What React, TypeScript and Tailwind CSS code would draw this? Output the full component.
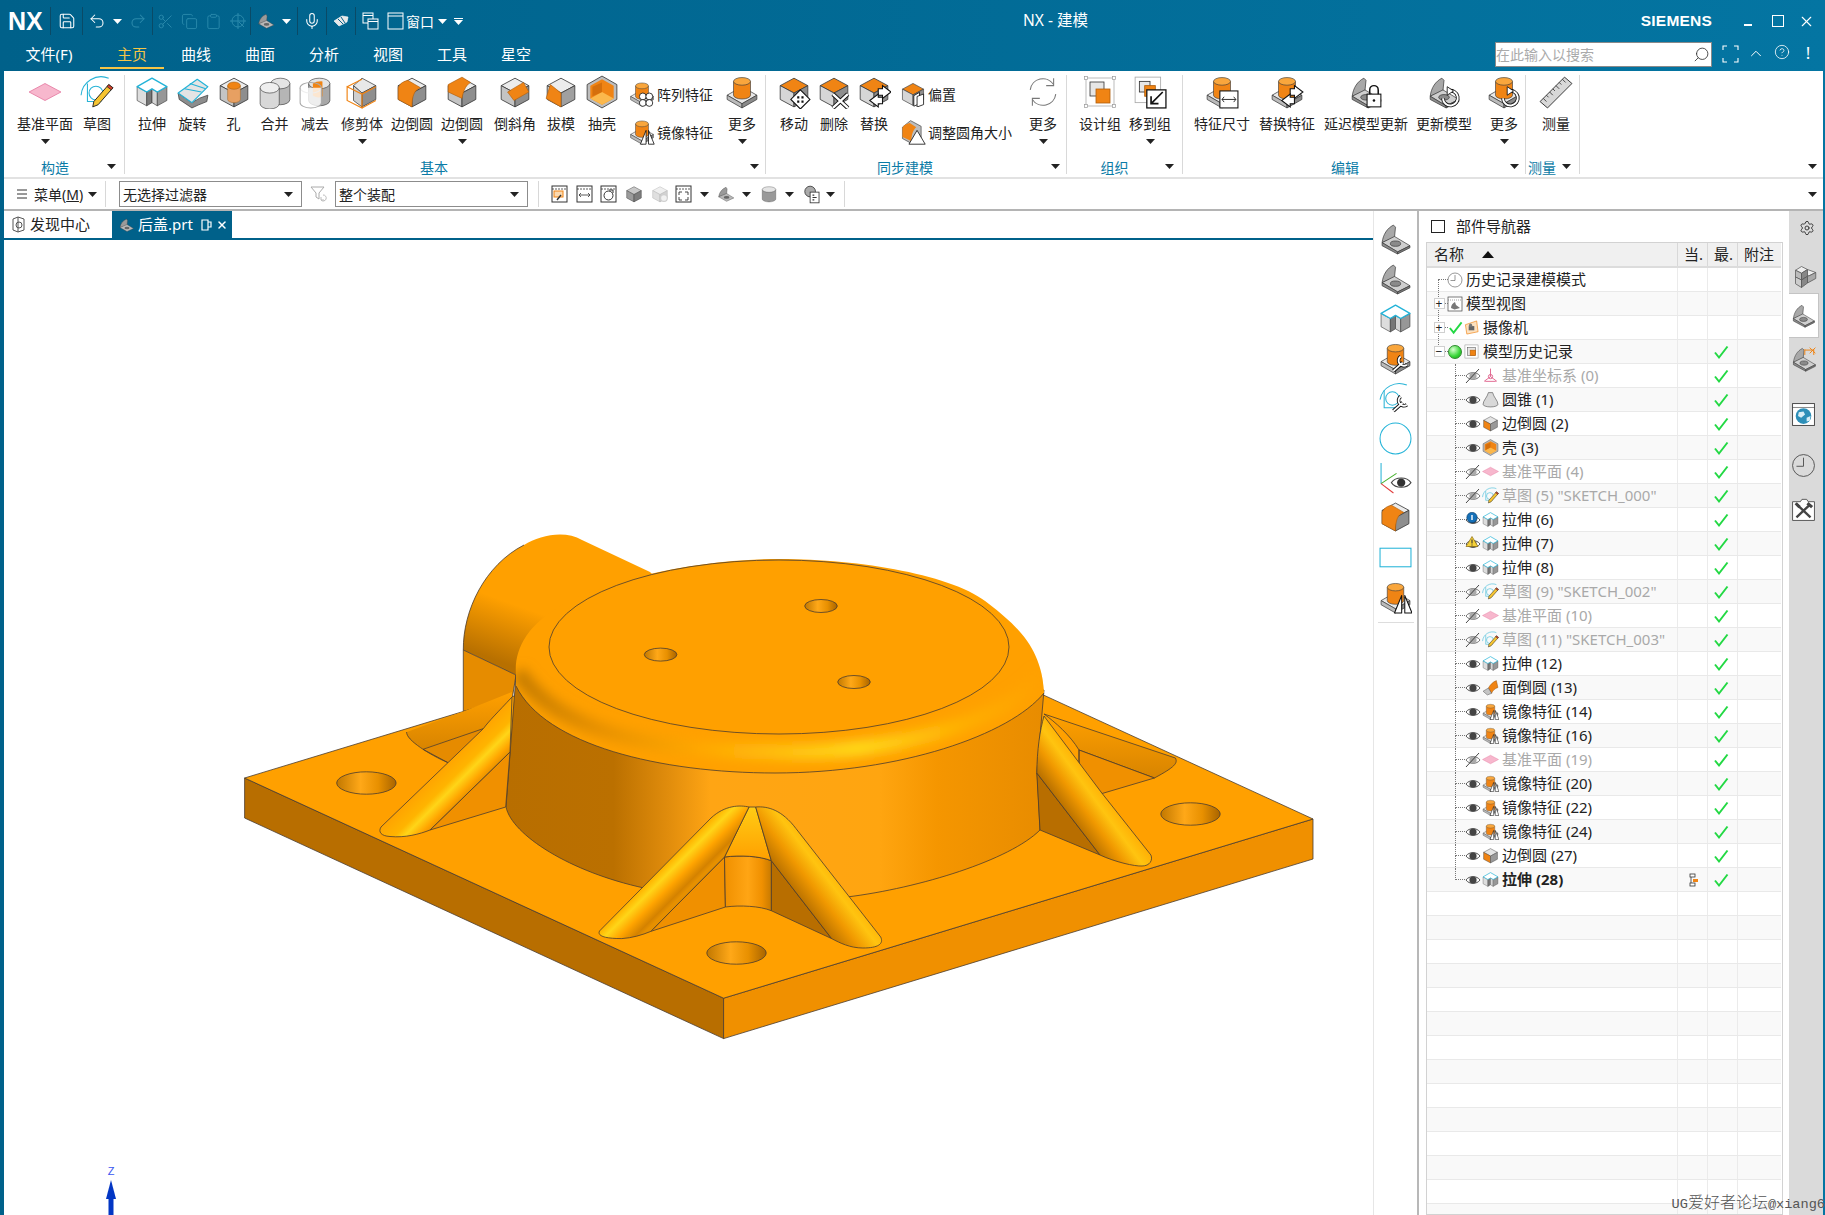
import type { ReactNode } from 'react'
import { Save, Undo2, Redo2, Scissors, Copy, Clipboard, Mic, X, Search, ChevronUp, CircleHelp, Settings } from 'lucide-react'

// shared little drawing parts, all on a 32 x 32 box
const Ico = ({ size = 32, children }: { size?: number; children: ReactNode }) => (
  <svg width={size} height={size} viewBox="0 0 32 32" className="shrink-0">
    {children}
  </svg>
)

const Caret = ({ color = '#222' }: { color?: string }) => (
  <svg width="9" height="5" viewBox="0 0 9 5" className="shrink-0">
    <polygon points="0,0 9,0 4.5,5" fill={color} />
  </svg>
)

const OR = '#f08414'
const ORL = '#f9a63c'
const LN = '#3c3c3c'

const Cube = ({ t = '#ececec', l = '#c4c4c4', r = '#8e8e8e' }: { t?: string; l?: string; r?: string }) => (
  <g stroke={LN} strokeWidth="0.8" strokeLinejoin="round">
    <polygon points="16,3 29,10 16,17 3,10" fill={t} />
    <polygon points="3,10 16,17 16,30 3,23" fill={l} />
    <polygon points="16,17 29,10 29,23 16,30" fill={r} />
  </g>
)

const Cyl = ({ cx, y, rx, ry, h, side = OR, top = ORL }: { cx: number; y: number; rx: number; ry: number; h: number; side?: string; top?: string }) => (
  <g stroke={LN} strokeWidth="0.6">
    <path d={`M${cx - rx} ${y} V${y + h} A${rx} ${ry} 0 0 0 ${cx + rx} ${y + h} V${y}`} fill={side} />
    <ellipse cx={cx} cy={y} rx={rx} ry={ry} fill={top} />
  </g>
)

const Block = () => (
  <g>
    <g stroke={LN} strokeWidth="0.7" strokeLinejoin="round">
      <polygon points="2,19 16,11 30,19 16,27" fill="#e8e8e8" />
      <polygon points="2,19 16,27 16,31 2,23" fill="#bbb" />
      <polygon points="16,27 30,19 30,23 16,31" fill="#8a8a8a" />
    </g>
    <Cyl cx={16} y={6} rx={8} ry={3.6} h={13} />
  </g>
)

const Bracket = () => (
  <g stroke={LN} strokeWidth="0.7" strokeLinejoin="round">
    <path d="M3 20 C4 12 8 6 14 3 L16 5 L15 15 Z" fill="#a8a8a8" />
    <polygon points="3,20 15,14 30,23 18,29" fill="#cfcfcf" />
    <polygon points="3,20 18,29 18,31 3,23" fill="#8d8d8d" />
    <polygon points="18,29 30,23 30,25 18,31" fill="#777" />
    <ellipse cx="16" cy="21" rx="5" ry="2.6" fill="#8a8a8a" />
  </g>
)

const OrangeTopCube = () => <Cube t={OR} l="#d6d6d6" r="#8e8e8e" />

const MirrorTri = ({ x = 0 }: { x?: number }) => (
  <g stroke="#111" strokeWidth="1" fill="#fff" strokeLinejoin="round" transform={`translate(${x} 0)`}>
    <polygon points="18,14 11,31 18,31" />
    <polygon points="21,14 21,31 28,31" />
  </g>
)

const Icons: Record<string, ReactNode> = {
  plane: <polygon points="16,8 31,16 16,24 1,16" fill="#f7b7cd" stroke="#e57ba2" strokeWidth="0.8" />,
  sketch: (
    <g fill="none">
      <path d="M1 19 A19 19 0 0 1 27 3" stroke="#27b3d6" strokeWidth="1" />
      <path d="M7 8 V25 H20" stroke="#27b3d6" strokeWidth="1" />
      <circle cx="15" cy="17" r="6.5" stroke="#27b3d6" strokeWidth="1" />
      <polygon points="27,9 31,12 17,28 12,30 13,25" fill="#f6c431" stroke="#222" strokeWidth="0.9" />
      <polygon points="27,9 31,12 29.5,14 25.5,11" fill="#d8402a" stroke="#222" strokeWidth="0.7" />
    </g>
  ),
  extrude: (
    <g strokeLinejoin="round">
      <polygon points="2,11 11,16 11,29 2,24" fill="#ddd" stroke={LN} strokeWidth="0.6" />
      <polygon points="11,16 16,13 16,26 11,29" fill="#777" stroke={LN} strokeWidth="0.6" />
      <polygon points="16,13 21,16 21,29 16,26" fill="#d5d5d5" stroke={LN} strokeWidth="0.6" />
      <polygon points="21,16 30,11 30,24 21,29" fill="#979797" stroke={LN} strokeWidth="0.6" />
      <polygon points="2,11 16,3 30,11 21,16 16,13 11,16" fill="#fff" stroke="#22b3d8" strokeWidth="1.3" />
    </g>
  ),
  revolve: (
    <g strokeLinejoin="round">
      <path d="M2 17 L15 26 Q22 21 30 19 L29 25 Q21 28 15 31 L3 23 Z" fill="#8d8d8d" stroke={LN} strokeWidth="0.7" />
      <polygon points="2,17 20,4 30,11 15,26" fill="#e4e4e4" stroke="#22b3d8" strokeWidth="1.1" />
      <path d="M8 13 L24 16 M13 8 L28 13" stroke="#22b3d8" strokeWidth="1" fill="none" />
    </g>
  ),
  hole: (
    <g>
      <Cube />
      <path d="M10 10 V23 A6 3 0 0 0 22 23 V10" fill="#e7a062" stroke="#a06a30" strokeWidth="0.5" />
      <ellipse cx="16" cy="10" rx="6" ry="3.4" fill={OR} stroke="#a05c10" strokeWidth="0.5" />
    </g>
  ),
  unite: (
    <g>
      <Cyl cx={21} y={8} rx={9} ry={5} h={15} side="#b5b5b5" top="#e4e4e4" />
      <Cyl cx={11} y={12} rx={9} ry={5} h={15} side="#d8d8d8" top="#efefef" />
    </g>
  ),
  subtract: (
    <g>
      <Cyl cx={20} y={8} rx={10} ry={5} h={16} side="#a8a8a8" top="#e4e4e4" />
      <path d="M14 8 A10 5 0 0 1 23 6 V20 C20 22 16 21 14 19 Z" fill={OR} />
      <g fill="none" stroke="#aaa" strokeWidth="1">
        <ellipse cx="12" cy="12" rx="10" ry="5" />
        <path d="M2 12 V26 A10 5 0 0 0 22 26 V12" fill="#fff" fillOpacity="0.8" />
      </g>
    </g>
  ),
  trim: (
    <g>
      <g stroke={LN} strokeWidth="0.7">
        <polygon points="16,3 29,10 16,17 8,10" fill="#e8e8e8" />
        <polygon points="16,17 29,10 29,23 16,30" fill="#8e8e8e" />
        <polygon points="8,10 16,17 16,30 8,24" fill="#cfcfcf" />
      </g>
      <path d="M2 11 L16 18 V31 L2 24 Z M2 11 L16 4 M16 18 L29 11 M16 31 L29 24" fill="none" stroke={OR} strokeWidth="1.1" />
    </g>
  ),
  blend: (
    <g>
      <Cube />
      <path d="M3 12 C5 7 9 6 12 5 L24 12 C18 14 16 20 16 30 L3 23 Z" fill={OR} stroke="#b05e0c" strokeWidth="0.6" />
    </g>
  ),
  blend2: (
    <g>
      <Cube />
      <path d="M3 9 L16 2 L24 7 C19 10 17 16 16 22 L3 16 Z" fill={OR} stroke="#b05e0c" strokeWidth="0.6" />
    </g>
  ),
  chamfer: (
    <g>
      <Cube />
      <polygon points="9,16 24,7 29,16 15,24" fill={OR} stroke="#b05e0c" strokeWidth="0.6" />
    </g>
  ),
  draft: (
    <g>
      <Cube r="#a0a0a0" />
      <polygon points="6,9 16,17 16,30 2,22" fill={OR} stroke="#b05e0c" strokeWidth="0.6" />
    </g>
  ),
  shell: (
    <g strokeLinejoin="round">
      <polygon points="16,1 30,9 30,23 16,31 2,23 2,9" fill="#bdbdbd" stroke={LN} strokeWidth="0.8" />
      <polygon points="16,4 27,10 27,22 16,28 5,22 5,10" fill={OR} />
      <polygon points="16,16 27,22 16,28 5,22" fill="#fbb84c" />
      <polygon points="16,16 16,7 7,11 7,20" fill="#d56f0c" />
    </g>
  ),
  pattern: (
    <g>
      <Block />
      <g fill="#fff" stroke="#111" strokeWidth="1">
        <circle cx="17" cy="19" r="4.2" />
        <circle cx="25" cy="19" r="4.2" />
        <circle cx="17" cy="27" r="4.2" />
        <circle cx="25" cy="27" r="4.2" />
      </g>
    </g>
  ),
  mirror: (
    <g>
      <Block />
      <MirrorTri x={3} />
    </g>
  ),
  more: <Block />,
  move: (
    <g>
      <OrangeTopCube />
      <polygon points="22,14 31,23 22,32 13,23" fill="#fff" stroke="#111" strokeWidth="1" />
      <path d="M19 20 h2 v2 h-2z M23 20 h2 v2 h-2z M19 24 h2 v2 h-2z M23 24 h2 v2 h-2z" fill="#111" />
    </g>
  ),
  del: (
    <g>
      <OrangeTopCube />
      <path d="M15 18 L29 31 M29 18 L15 31" stroke="#111" strokeWidth="4" />
      <path d="M15 18 L29 31 M29 18 L15 31" stroke="#fff" strokeWidth="2.2" />
    </g>
  ),
  swap: (
    <g>
      <OrangeTopCube />
      <polygon points="20,13 24,13 24,10 32,16 24,22 24,19 20,19" fill="#fff" stroke="#111" strokeWidth="1" />
      <polygon points="24,21 20,21 20,18 12,24 20,30 20,27 24,27" fill="#fff" stroke="#111" strokeWidth="1" />
    </g>
  ),
  offset: (
    <g>
      <OrangeTopCube />
      <path d="M17 18 L24 14 V28 L17 31 Z" fill="#fff" stroke="#111" strokeWidth="1" />
      <path d="M21 19 L29 16 V29 L21 32 Z" fill="#fff" stroke="#111" strokeWidth="1" />
    </g>
  ),
  resize: (
    <g>
      <path d="M3 10 L13 2 L26 9 V23 L14 30 L3 24 Z" fill="#bdbdbd" stroke={LN} strokeWidth="0.8" />
      <path d="M3 11 C5 7 9 6 12 5 L20 10 C16 13 14 20 14 27 L3 22 Z" fill={OR} />
      <polygon points="21,14 31,31 11,31" fill="#fff" stroke="#111" strokeWidth="1" />
    </g>
  ),
  sync: (
    <g fill="none" stroke="#777" strokeWidth="1">
      <path d="M4 14 A12 12 0 0 1 26 9" />
      <path d="M28 18 A12 12 0 0 1 6 23" />
      <path d="M26 3 V10 H19 M6 29 V22 H13" />
    </g>
  ),
  group: (
    <g>
      <rect x="2" y="2" width="28" height="28" fill="none" stroke="#aaa" strokeWidth="0.8" />
      <g fill="#fff" stroke="#999" strokeWidth="0.7">
        <rect x="0.5" y="0.5" width="3" height="3" />
        <rect x="28.5" y="0.5" width="3" height="3" />
        <rect x="0.5" y="28.5" width="3" height="3" />
        <rect x="28.5" y="28.5" width="3" height="3" />
      </g>
      <rect x="6" y="6" width="14" height="14" fill="#e6e6e6" stroke="#333" strokeWidth="0.8" />
      <rect x="12" y="13" width="14" height="14" fill={OR} stroke="#b05e0c" strokeWidth="0.8" />
    </g>
  ),
  toGroup: (
    <g>
      <rect x="2" y="2" width="24" height="24" fill="none" stroke="#aaa" strokeWidth="0.8" />
      <rect x="6" y="6" width="10" height="10" fill="#e6e6e6" stroke="#333" strokeWidth="0.8" />
      <rect x="11" y="10" width="10" height="10" fill={OR} stroke="#b05e0c" strokeWidth="0.8" />
      <rect x="13" y="14" width="18" height="17" fill="#fff" stroke="#111" strokeWidth="1.2" />
      <path d="M28 16 L18 26 M17 20 V27 H24" fill="none" stroke="#111" strokeWidth="1.6" />
    </g>
  ),
  dim: (
    <g>
      <Block />
      <rect x="14" y="15" width="17" height="16" fill="#fff" stroke="#111" strokeWidth="1" />
      <path d="M16 23 H29 M18 20.5 L16 23 L18 25.5 M27 20.5 L29 23 L27 25.5" fill="none" stroke="#111" strokeWidth="0.8" />
    </g>
  ),
  swapFeat: (
    <g>
      <Block />
      <polygon points="19,13 23,13 23,10 31,16 23,22 23,19 19,19" fill="#fff" stroke="#111" strokeWidth="1" />
      <polygon points="23,21 19,21 19,18 11,24 19,30 19,27 23,27" fill="#fff" stroke="#111" strokeWidth="1" />
    </g>
  ),
  delay: (
    <g>
      <Bracket />
      <rect x="17" y="18" width="13" height="12" fill="#fff" stroke="#111" strokeWidth="1" />
      <path d="M19.5 18 V14 A4 4 0 0 1 27.5 14 V18" fill="none" stroke="#111" strokeWidth="1.4" />
      <circle cx="23.5" cy="24" r="1.2" fill="#111" />
    </g>
  ),
  update: (
    <g>
      <Bracket />
      <path d="M15 22 A7 7 0 1 0 20 15" fill="none" stroke="#111" strokeWidth="3.4" />
      <path d="M15 22 A7 7 0 1 0 20 15" fill="none" stroke="#fff" strokeWidth="1.8" />
      <polygon points="19,11 25,15 19,19" fill="#fff" stroke="#111" strokeWidth="0.8" />
    </g>
  ),
  updateB: (
    <g>
      <Block />
      <path d="M15 22 A7 7 0 1 0 20 15" fill="none" stroke="#111" strokeWidth="3.4" />
      <path d="M15 22 A7 7 0 1 0 20 15" fill="none" stroke="#fff" strokeWidth="1.8" />
      <polygon points="19,11 25,15 19,19" fill="#fff" stroke="#111" strokeWidth="0.8" />
    </g>
  ),
  ruler: (
    <g>
      <polygon points="24,2 31,8 8,31 1,25" fill="#d8d8d8" stroke="#333" strokeWidth="0.9" />
      <path d="M22 4 L25 7 M19 7 L21 9 M16 10 L19 13 M13 13 L15 15 M10 16 L13 19 M7 19 L9 21 M4 22 L7 25" stroke="#333" strokeWidth="0.8" />
    </g>
  ),
  part: (
    <g>
      <path d="M3 21 C4 13 9 7 16 4 L18 7 L17 17 Z" fill="#9a9a9a" stroke="#444" strokeWidth="0.7" />
      <polygon points="3,21 17,15 30,23 17,29" fill="#b8b8b8" stroke="#444" strokeWidth="0.7" />
      <ellipse cx="17" cy="22" rx="5" ry="2.4" fill="#666" />
    </g>
  ),
  bracket: <Bracket />,
  blendSm: <Cube t="#e4e4e4" l={OR} r="#999" />,
  cone: <path d="M12 3 H20 C22 12 30 18 30 25 A14 5 0 0 1 2 25 C2 18 10 12 12 3 Z" fill="#d8d8d8" stroke={LN} strokeWidth="1" />,
  csys: (
    <g fill="none" stroke="#e0668f" strokeWidth="1.8">
      <path d="M16 3 V18 M16 18 L4 27 M16 18 L28 27 M6 27 H26" />
      <circle cx="16" cy="18" r="4" />
    </g>
  ),
  faceBlend: (
    <g strokeLinejoin="round">
      <path d="M12 17 C16 10 20 6 27 3 L30 16 C24 18 20 22 18 27 Z" fill={OR} stroke="#8a4a08" strokeWidth="0.8" />
      <polygon points="2,23 12,17 18,27 10,30" fill="#c4c4c4" stroke={LN} strokeWidth="0.8" />
    </g>
  ),
  mirrorSm: (
    <g>
      <Block />
      <MirrorTri x={4} />
    </g>
  ),
  wrench: (
    <g>
      <Block />
      <path d="M14 28 L23 20 M21 14 A5 5 0 0 0 27 22" stroke="#111" strokeWidth="3.6" fill="none" />
      <path d="M14 28 L23 20 M21 14 A5 5 0 0 0 27 22" stroke="#fff" strokeWidth="1.8" fill="none" />
    </g>
  ),
  sketchWrench: (
    <g fill="none">
      <path d="M1 17 A19 19 0 0 1 27 3" stroke="#27b3d6" strokeWidth="1" />
      <path d="M5 8 V25 H18" stroke="#27b3d6" strokeWidth="1" />
      <circle cx="13" cy="16" r="6.5" stroke="#27b3d6" strokeWidth="1" />
      <path d="M14 28 L23 20 M21 14 A5 5 0 0 0 27 22" stroke="#111" strokeWidth="3.6" />
      <path d="M14 28 L23 20 M21 14 A5 5 0 0 0 27 22" stroke="#fff" strokeWidth="1.8" />
    </g>
  ),
  circle: <circle cx="16" cy="16" r="15" fill="none" stroke="#22b3d8" strokeWidth="1" />,
  axisEye: (
    <g fill="none">
      <path d="M2 2 V22" stroke="#27b3d6" strokeWidth="1" />
      <path d="M2 22 L17 12" stroke="#43b02a" strokeWidth="1" />
      <path d="M2 22 L14 31" stroke="#e03a3a" strokeWidth="1" />
      <path d="M12 21 C16 15 27 15 31 21 C27 27 16 27 12 21 Z" stroke="#444" strokeWidth="1" />
      <circle cx="21.5" cy="21" r="4" fill="#333" />
    </g>
  ),
  rect: <rect x="1" y="7" width="30" height="18" fill="none" stroke="#22b3d8" strokeWidth="1" />,
  cam: (
    <g>
      <polygon points="3,10 27,2 30,25 6,30" fill="#fde2c0" stroke={OR} strokeWidth="1.4" />
      <rect x="10" y="13" width="12" height="9" fill="#666" />
      <circle cx="14" cy="11" r="3.4" fill="#777" />
    </g>
  ),
  hist: (
    <g>
      <rect x="2" y="2" width="28" height="28" fill="#fff" stroke="#888" strokeWidth="1" />
      <rect x="7" y="7" width="18" height="18" fill="#e6e6e6" stroke="#444" strokeWidth="1" />
      <rect x="13" y="13" width="12" height="12" fill={OR} stroke="#a85a0c" strokeWidth="1" />
    </g>
  ),
  view: (
    <g>
      <rect x="2" y="2" width="28" height="28" fill="#fff" stroke="#444" strokeWidth="1.4" />
      <path d="M2 8 H30" stroke="#444" strokeWidth="1" strokeDasharray="2 2" />
      <path d="M8 24 C8 18 12 14 16 12 L18 18 L26 24 L15 27 Z" fill="#777" />
    </g>
  ),
  sideBox: (
    <g stroke="#555" strokeWidth="1" strokeLinejoin="round">
      <polygon points="10,2 18,6 10,11 2,7" fill="#eee" />
      <polygon points="2,7 10,11 10,20 2,16" fill="#bbb" />
      <polygon points="10,11 18,6 18,15 10,20" fill="#888" />
      <polygon points="2,16 10,20 10,30 2,25" fill="#ccc" />
      <polygon points="10,20 18,15 18,24 10,30" fill="#888" />
      <polygon points="18,6 29,10 21,14 18,15" fill="#eee" />
      <polygon points="18,15 21,14 29,10 29,18 18,24" fill="#aaa" />
    </g>
  ),
  partSpec: (
    <g>
      <Bracket />
      <path d="M17 11 L17 4 M17 5 H28 M28 4 V11 M23 2 L30 9 M30 2 L23 9" stroke={OR} strokeWidth="1.2" fill="none" />
    </g>
  ),
  globe: (
    <g>
      <rect x="2" y="2" width="28" height="28" fill="#fff" stroke="#444" strokeWidth="1.2" />
      <path d="M2 7 H30" stroke="#444" strokeWidth="0.8" />
      <circle cx="16" cy="18" r="10" fill="#2d8fb8" />
      <path d="M10 13 L16 12 L18 16 L13 20 L9 18 Z M20 20 L25 18 L24 24 L20 25 Z" fill="#d8eef6" />
    </g>
  ),
  clock: (
    <g fill="none" stroke="#444" strokeWidth="1.1">
      <circle cx="16" cy="16" r="14" />
      <path d="M16 6 V17 H7" />
    </g>
  ),
  tools: (
    <g>
      <path d="M2 6 H12 L14 3 H20 L22 6 H30 V30 H2 Z" fill="#fff" stroke="#444" strokeWidth="1.1" />
      <path d="M7 26 L24 10 M8 10 L25 26" stroke="#444" strokeWidth="3" />
      <path d="M6 8 L11 13 M21 8 L27 13" stroke="#444" strokeWidth="4" />
    </g>
  ),
}

const I = ({ k, size = 32 }: { k: string; size?: number }) => <Ico size={size}>{Icons[k]}</Ico>

type Btn = { w: number; label: string; icon: string; arrow?: boolean; size?: number }
type Small = { label: string; icon: string }

const Big = ({ w, label, icon, arrow, size = 34 }: Btn) => (
  <div className="flex flex-col items-center shrink-0 text-[14px] leading-[18px] text-[#222]" style={{ width: w }}>
    <div className="h-[34px] flex items-center justify-center">
      <I k={icon} size={size} />
    </div>
    <div className="mt-[6px] whitespace-nowrap">{label}</div>
    {arrow && (
      <div className="mt-[6px]">
        <Caret />
      </div>
    )}
  </div>
)

const SmallCol = ({ w, items, pad }: { w: number; items: Small[]; pad: number }) => (
  <div className="flex flex-col shrink-0 gap-[8px] pt-[4px] text-[14px] text-[#222]" style={{ width: w, paddingLeft: pad }}>
    {items.map((it) => (
      <div key={it.label} className="flex items-center gap-[2px] h-[30px] whitespace-nowrap">
        <I k={it.icon} size={26} />
        {it.label}
      </div>
    ))}
  </div>
)

const Group = ({ w, pl, title, titleClass, arrowClass, children }: { w: number; pl: number; title: string; titleClass?: string; arrowClass?: string; children: ReactNode }) => (
  <div className="h-full flex flex-col shrink-0 border-r border-[#d9d9d9] relative" style={{ width: w }}>
    <div className="flex h-[85px]" style={{ paddingLeft: pl }}>
      {children}
    </div>
    <div className={`h-[14px] text-[14px] leading-[16px] text-[#0b7ba6] ${titleClass ?? 'text-center'}`}>{title}</div>
    <div className={`absolute top-[89px] ${arrowClass ?? 'right-[6px]'}`}>
      <Caret />
    </div>
  </div>
)

const Ribbon = () => (
  <div className="h-[108px] bg-white border-b-2 border-[#e2e2e2] pt-[4px] pb-[3px] flex relative">
    <Group w={121} pl={0} title="构造" titleClass="pr-[18px] text-center" arrowClass="right-[8px]">
      <Big w={82} label="基准平面" icon="plane" arrow />
      <Big w={22} label="草图" icon="sketch" />
    </Group>
    <Group w={641} pl={7} title="基本" titleClass="pr-[22px] text-center">
      <Big w={40} label="拉伸" icon="extrude" />
      <Big w={41} label="旋转" icon="revolve" />
      <Big w={41} label="孔" icon="hole" />
      <Big w={41} label="合并" icon="unite" />
      <Big w={40} label="减去" icon="subtract" />
      <Big w={54} label="修剪体" icon="trim" arrow />
      <Big w={46} label="边倒圆" icon="blend" />
      <Big w={54} label="边倒圆" icon="blend2" arrow />
      <Big w={52} label="倒斜角" icon="chamfer" />
      <Big w={40} label="拔模" icon="draft" />
      <Big w={42} label="抽壳" icon="shell" />
      <SmallCol w={99} pad={6} items={[{ label: '阵列特征', icon: 'pattern' }, { label: '镜像特征', icon: 'mirror' }]} />
      <Big w={40} label="更多" icon="more" arrow />
    </Group>
    <Group w={301} pl={8} title="同步建模" titleClass="pr-[22px] text-center">
      <Big w={40} label="移动" icon="move" />
      <Big w={40} label="删除" icon="del" />
      <Big w={40} label="替换" icon="swap" />
      <SmallCol w={129} pad={6} items={[{ label: '偏置', icon: 'offset' }, { label: '调整圆角大小', icon: 'resize' }]} />
      <Big w={40} label="更多" icon="sync" arrow />
    </Group>
    <Group w={116} pl={8} title="组织" titleClass="pr-[20px] text-center" arrowClass="right-[8px]">
      <Big w={50} label="设计组" icon="group" size={32} />
      <Big w={50} label="移到组" icon="toGroup" arrow />
    </Group>
    <Group w={343} pl={7} title="编辑" titleClass="pr-[18px] text-center">
      <Big w={64} label="特征尺寸" icon="dim" />
      <Big w={66} label="替换特征" icon="swapFeat" />
      <Big w={92} label="延迟模型更新" icon="delay" />
      <Big w={64} label="更新模型" icon="update" />
      <Big w={56} label="更多" icon="updateB" arrow />
    </Group>
    <Group w={54} pl={3} title="测量" titleClass="pl-[2px]" arrowClass="right-[8px]">
      <Big w={54} label="测量" icon="ruler" />
    </Group>
    <div className="absolute right-[6px] top-[93px]">
      <Caret />
    </div>
  </div>
)

const Combo = ({ w, text }: { w: number; text: string }) => (
  <div className="h-[26px] border border-[#8c8c8c] flex items-center justify-between pl-[3px] pr-[8px] text-[14px] text-[#222] shrink-0" style={{ width: w }}>
    {text}
    <Caret />
  </div>
)

const WinIco = ({ children }: { children?: ReactNode }) => (
  <svg width="18" height="18" viewBox="0 0 18 18" className="shrink-0">
    <rect x="1" y="1" width="15" height="16" fill="#fff" stroke="#333" strokeWidth="1" />
    <path d="M1 4 H16" stroke="#333" strokeWidth="0.8" strokeDasharray="2 1" />
    {children}
  </svg>
)

const Toolbar = () => (
  <div className="h-[32px] bg-white border-b-2 border-[#b4b4b4] flex items-center relative text-[14px] text-[#222]">
    <svg width="10" height="10" viewBox="0 0 10 10" className="ml-[13px] shrink-0">
      <path d="M0 1 H10 M0 5 H10 M0 9 H10" stroke="#333" strokeWidth="1" />
    </svg>
    <span className="ml-[7px] whitespace-nowrap">
      菜单(<span className="underline">M</span>)
    </span>
    <span className="ml-[5px]">
      <Caret />
    </span>
    <div className="w-px h-[26px] bg-[#d8d8d8] ml-[8px] mr-[13px]" />
    <Combo w={183} text="无选择过滤器" />
    <svg width="20" height="20" viewBox="0 0 20 20" className="ml-[7px] mr-[6px] shrink-0">
      <path d="M2 3 H15 L10 9 V15 L7 13 V9 Z" fill="#fff" stroke="#aaa" strokeWidth="1" />
      <path d="M12 16 A3 3 0 1 0 14 11 M12 13 V16 H15" fill="none" stroke="#bbb" strokeWidth="1" />
    </svg>
    <Combo w={193} text="整个装配" />
    <div className="w-px h-[26px] bg-[#d8d8d8] ml-[10px] mr-[12px]" />
    <div className="flex items-center">
      <div className="w-[25px]">
        <WinIco>
          <rect x="3" y="6" width="9" height="6" fill="#fbd9b0" stroke={OR} strokeWidth="1" />
          <path d="M6 15 L10 10" stroke="#333" strokeWidth="1.4" />
        </WinIco>
      </div>
      <div className="w-[24px]">
        <WinIco>
          <path d="M3 10 H14 M5 8 L3 10 L5 12 M12 8 L14 10 L12 12" fill="none" stroke="#333" strokeWidth="0.8" />
        </WinIco>
      </div>
      <div className="w-[25px]">
        <WinIco>
          <circle cx="8.5" cy="10.5" r="4.5" fill="none" stroke="#333" strokeWidth="1" />
          <path d="M9 5 H13 V8" fill="none" stroke="#333" strokeWidth="1" />
        </WinIco>
      </div>
      <div className="w-[25px] flex">
        <svg width="18" height="18" viewBox="0 0 32 32">
          <Cube t="#c8c8c8" l="#9b9b9b" r="#7d7d7d" />
        </svg>
      </div>
      <div className="w-[25px] flex opacity-40">
        <svg width="20" height="18" viewBox="0 0 32 32">
          <Cube t="#d8d8d8" l="#b0b0b0" r="#909090" />
          <circle cx="23" cy="23" r="6" fill="#ddd" stroke="#888" strokeWidth="2" />
        </svg>
      </div>
      <div className="w-[20px]">
        <WinIco>
          <path d="M4 7 L7 7 M4 7 V10 M13 7 L10 7 M13 7 V10 M4 15 H7 M4 15 V12 M13 15 H10 M13 15 V12" stroke="#333" strokeWidth="0.9" fill="none" />
        </WinIco>
      </div>
      <div className="w-[22px] pl-[5px]">
        <Caret />
      </div>
      <div className="w-[21px]">
        <svg width="18" height="18" viewBox="0 0 32 32">
          {Icons.part}
        </svg>
      </div>
      <div className="w-[22px] pl-[4px]">
        <Caret />
      </div>
      <div className="w-[22px]">
        <svg width="18" height="18" viewBox="0 0 32 32">
          <Cyl cx={16} y={8} rx={12} ry={5} h={17} side="#999" top="#e4e4e4" />
        </svg>
      </div>
      <div className="w-[21px] pl-[3px]">
        <Caret />
      </div>
      <div className="w-[21px]">
        <svg width="19" height="19" viewBox="0 0 32 32">
          <circle cx="12" cy="11" r="9" fill="#aaa" stroke="#333" strokeWidth="1.4" />
          <rect x="12" y="12" width="15" height="18" fill="#fff" stroke="#333" strokeWidth="1.4" />
          <path d="M16 17 h3 M16 21 h7 M16 25 h3" stroke="#333" strokeWidth="2" />
        </svg>
      </div>
      <div className="w-[20px] pl-[2px]">
        <Caret />
      </div>
    </div>
    <div className="w-px h-[26px] bg-[#d8d8d8]" />
    <div className="ml-auto mr-[6px]">
      <Caret />
    </div>
  </div>
)

const Sep = () => <div className="w-px h-[28px] bg-[#0a4a66] shrink-0" />

const TitleBar = () => (
  <div className="h-[36px] pt-[6px] flex items-center text-white">
    <div className="w-[50px] pl-[8px] text-[25px] leading-none font-bold font-['Liberation_Sans',sans-serif] shrink-0">NX</div>
    <Sep />
    <div className="w-[31px] flex justify-center"><Save size={18} strokeWidth={1.4} /></div>
    <Sep />
    <div className="w-[28px] flex justify-center"><Undo2 size={18} strokeWidth={1.4} /></div>
    <div className="w-[12px] flex justify-center"><Caret color="#fff" /></div>
    <div className="w-[29px] flex justify-center text-[#2b8aac]"><Redo2 size={18} strokeWidth={1.4} /></div>
    <Sep />
    <div className="w-[24px] flex justify-center text-[#2b8aac]"><Scissors size={17} strokeWidth={1.3} /></div>
    <div className="w-[24px] flex justify-center text-[#2b8aac]"><Copy size={17} strokeWidth={1.3} /></div>
    <div className="w-[24px] flex justify-center text-[#2b8aac]"><Clipboard size={17} strokeWidth={1.3} /></div>
    <div className="w-[25px] flex justify-center text-[#2b8aac]">
      <svg width="18" height="18" viewBox="0 0 18 18" fill="none" stroke="currentColor" strokeWidth="1">
        <circle cx="9" cy="9" r="6" />
        <path d="M9 1 V17 M1 9 H17 M10 10 L15 15" />
      </svg>
    </div>
    <Sep />
    <div className="w-[30px] flex justify-center">
      <svg width="20" height="18" viewBox="0 0 32 32">{Icons.part}</svg>
    </div>
    <div className="w-[16px] pl-[1px]"><Caret color="#fff" /></div>
    <Sep />
    <div className="w-[28px] flex justify-center"><Mic size={18} strokeWidth={1.4} /></div>
    <Sep />
    <div className="w-[28px] flex justify-center">
      <svg width="18" height="14" viewBox="0 0 18 14">
        <path d="M2 7 L10 2 L16 3 L15 8 L7 12 Z" fill="#e8e8e8" stroke="#fff" strokeWidth="0.6" />
        <path d="M6 5 L11 10 M9 3 L13 9" stroke="#05608a" strokeWidth="1" />
      </svg>
    </div>
    <Sep />
    <div className="w-[29px] flex justify-center">
      <svg width="17" height="18" viewBox="0 0 17 18" fill="none" stroke="#fff" strokeWidth="1">
        <rect x="1" y="1" width="10" height="10" />
        <path d="M1 3.5 H11" />
        <rect x="6" y="7" width="10" height="10" fill="#05618a" />
        <path d="M6 9.5 H16" />
      </svg>
    </div>
    <div className="w-[20px] flex justify-center">
      <svg width="17" height="18" viewBox="0 0 17 18" fill="none" stroke="#fff" strokeWidth="1">
        <rect x="1" y="1" width="15" height="16" />
        <path d="M1 4 H16" />
      </svg>
    </div>
    <span className="ml-[1px] text-[14px] whitespace-nowrap w-[32px]">窗口</span>
    <div className="w-[16px]"><Caret color="#fff" /></div>
    <svg width="9" height="7" viewBox="0 0 9 7" className="shrink-0">
      <path d="M0 0.5 H9" stroke="#fff" />
      <polygon points="0,2 9,2 4.5,7" fill="#fff" />
    </svg>
    <div className="ml-[560px] text-[15.5px] whitespace-nowrap">NX - 建模</div>
    <div className="ml-auto text-[15.5px] tracking-[0.2px] font-bold font-['Liberation_Sans',sans-serif] mr-[21px]">SIEMENS</div>
    <div className="w-[30px] flex justify-center pt-[8px]"><div className="w-[8px] h-[2px] bg-white" /></div>
    <div className="w-[30px] flex justify-center"><div className="w-[12px] h-[12px] border border-white" /></div>
    <div className="w-[26px] flex justify-center"><X size={17} strokeWidth={1.6} /></div>
    <div className="w-[6px]" />
  </div>
)

const tabs = ['曲线', '曲面', '分析', '视图', '工具', '星空']

const MenuBar = () => (
  <div className="h-[35px] flex items-stretch text-white text-[15px] pl-[17px]">
    <div className="w-[64px] text-center leading-[37px]">文件(F)</div>
    <div className="w-[64px] ml-[19px] text-center leading-[37px] text-[#f6c546] h-[33px] border-b-2 border-[#f6c546]">主页</div>
    {tabs.map((t) => (
      <div key={t} className="w-[64px] text-center leading-[37px]">
        {t}
      </div>
    ))}
    <div className="ml-auto flex items-start text-[#fff]">
      <div className="w-[217px] h-[25px] mt-[6px] bg-white border border-[#8a8a8a] flex items-center justify-between text-[14px] text-[#aaa] pr-[1px]">
        在此输入以搜索
        <Search size={17} strokeWidth={1.2} className="text-[#333] -scale-x-100" />
      </div>
      <div className="w-[35px] h-[35px] flex items-start justify-center pt-[9px] pl-[2px]">
        <svg width="17" height="18" viewBox="0 0 17 18" fill="none" stroke="#fff" strokeWidth="1.1">
          <path d="M1 5 V1 H5 M12 1 H16 V5 M16 13 V17 H12 M5 17 H1 V13" />
        </svg>
      </div>
      <div className="w-[18px] flex justify-center pt-[8px]"><ChevronUp size={19} strokeWidth={1.3} /></div>
      <div className="w-[34px] flex justify-center pt-[8px]"><CircleHelp size={16} strokeWidth={1.2} /></div>
      <div className="w-[18px] pt-[7px] text-center text-[17px] leading-[20px]">!</div>
      <div className="w-[8px]" />
    </div>
  </div>
)

const Model = () => (
  <svg width="1369" height="975" viewBox="4 240 1369 975" className="block">
    <defs>
      <linearGradient id="boss" gradientUnits="userSpaceOnUse" x1="502" y1="600" x2="482" y2="655">
        <stop offset="0" stopColor="#ffa000" />
        <stop offset="1" stopColor="#b87000" />
      </linearGradient>
      <linearGradient id="side" gradientUnits="userSpaceOnUse" x1="506" y1="0" x2="1044" y2="0">
        <stop offset="0" stopColor="#b86e00" />
        <stop offset="0.2" stopColor="#bb7000" />
        <stop offset="0.3" stopColor="#e08c0c" />
        <stop offset="0.38" stopColor="#ffa514" />
        <stop offset="0.695" stopColor="#ffa510" />
        <stop offset="0.8" stopColor="#f59600" />
        <stop offset="1" stopColor="#e88c00" />
      </linearGradient>
      <linearGradient id="fil" gradientUnits="userSpaceOnUse" x1="516" y1="0" x2="1042" y2="0">
        <stop offset="0" stopColor="#c27a00" />
        <stop offset="0.16" stopColor="#e69000" />
        <stop offset="0.35" stopColor="#ffa800" />
        <stop offset="0.65" stopColor="#ffdd1e" />
        <stop offset="0.85" stopColor="#ffb000" />
        <stop offset="1" stopColor="#ffa000" />
      </linearGradient>
      <linearGradient id="ribL" gradientUnits="userSpaceOnUse" x1="437" y1="767" x2="472" y2="802">
        <stop offset="0" stopColor="#ffa000" />
        <stop offset="0.38" stopColor="#ffb400" />
        <stop offset="0.52" stopColor="#ffd518" />
        <stop offset="0.72" stopColor="#ffa400" />
        <stop offset="0.92" stopColor="#d48200" />
        <stop offset="1" stopColor="#e69000" />
      </linearGradient>
      <linearGradient id="ribF" gradientUnits="userSpaceOnUse" x1="648" y1="855" x2="685" y2="892">
        <stop offset="0" stopColor="#ffa000" />
        <stop offset="0.38" stopColor="#ffb400" />
        <stop offset="0.52" stopColor="#ffd518" />
        <stop offset="0.72" stopColor="#ffa400" />
        <stop offset="0.92" stopColor="#d48200" />
        <stop offset="1" stopColor="#e69000" />
      </linearGradient>
      <linearGradient id="ribG" gradientUnits="userSpaceOnUse" x1="800" y1="900" x2="842" y2="868">
        <stop offset="0" stopColor="#b87000" />
        <stop offset="0.35" stopColor="#f09800" />
        <stop offset="0.65" stopColor="#ffc410" />
        <stop offset="1" stopColor="#ffa800" />
      </linearGradient>
      <linearGradient id="ribR" gradientUnits="userSpaceOnUse" x1="1068" y1="815" x2="1106" y2="787">
        <stop offset="0" stopColor="#b87000" />
        <stop offset="0.35" stopColor="#f09800" />
        <stop offset="0.65" stopColor="#ffc410" />
        <stop offset="1" stopColor="#ffa800" />
      </linearGradient>
      <linearGradient id="wedge" x1="0" y1="0" x2="0" y2="1">
        <stop offset="0" stopColor="#ffcc14" />
        <stop offset="1" stopColor="#ff9f00" />
      </linearGradient>
      <linearGradient id="col" x1="0" y1="0" x2="1" y2="0">
        <stop offset="0" stopColor="#f09000" />
        <stop offset="0.5" stopColor="#ffa514" />
        <stop offset="0.8" stopColor="#f09000" />
        <stop offset="1" stopColor="#c87a00" />
      </linearGradient>
      <linearGradient id="hole" x1="0" y1="0" x2="1" y2="0">
        <stop offset="0" stopColor="#c27800" />
        <stop offset="0.4" stopColor="#ffa818" />
        <stop offset="0.7" stopColor="#e89000" />
        <stop offset="1" stopColor="#a86400" />
      </linearGradient>
      <linearGradient id="pocket" x1="0" y1="0" x2="0" y2="1">
        <stop offset="0" stopColor="#ffa000" />
        <stop offset="1" stopColor="#d88400" />
      </linearGradient>
      <filter id="soft" x="-10%" y="-50%" width="120%" height="200%">
        <feGaussianBlur stdDeviation="6" />
      </filter>
      <clipPath id="filClip">
        <path d="M516 675 C514 650 526 625 564 604 C605 582 690 559 780 559 C860 559 955 575 989 604 C1020 628 1042 650 1044 693 C1010 735 900 773 775 773 C660 773 545 745 516 686 Z" />
      </clipPath>
    </defs>
    <g stroke="#4a3c30" strokeWidth="0.8" strokeLinejoin="round">
      {/* rear boss */}
      <path d="M463.3 650 C463 610 485 565 524 545 C540 535 565 530 582 540 L650 572 L720 640 L516 675 Z" fill="url(#boss)" stroke="none" />
      <path d="M463.3 650 C463 610 485 565 524 545" fill="none" />
      <path d="M463.3 650 L516 675 L512 700 L463.3 711.4 Z" fill="#e68c00" />
      {/* plate */}
      <polygon points="244.6,778 723.6,998.2 723.6,1038.6 244.6,818" fill="#b86e00" />
      <polygon points="723.6,998.2 1313,819 1313,859 723.6,1038.6" fill="#f09000" />
      <polygon points="244.6,778 834,598.7 1313,819 723.6,998.2" fill="#ffa000" />
      {/* rear pockets */}
      <path d="M406.6 732 L463.3 711.4 L512 692 L512 700 L483.4 728.6 L423 749 C414 743 406 738 406.6 732 Z" fill="url(#pocket)" stroke="none" />
      <path d="M423 749.3 L483.4 728.6 L460 775 L447.7 762.5 Z" fill="#e68b00" />
      <path d="M406.6 732 C406 740 430 755 447.7 762.5" fill="none" />
      <path d="M1044 714 L1175.4 758 C1178 763 1175 767 1154.4 778 L1079 750 C1070 735 1055 722 1044 714 Z" fill="url(#pocket)" />
      <path d="M1079 750 L1154.4 778 L1101.8 793.6 L1079 766 Z" fill="#f09000" />
      <path d="M1079 750 V766" fill="none" />
      {/* plate holes */}
      <ellipse cx="366.4" cy="783" rx="29.7" ry="11.2" fill="url(#hole)" />
      <ellipse cx="736.5" cy="953" rx="29.7" ry="11.2" fill="url(#hole)" />
      <ellipse cx="1190.5" cy="814" rx="29.7" ry="11.2" fill="url(#hole)" />
      {/* main body */}
      <path d="M516 675 L506 807 C512 835 570 872 644 888 C700 900 790 905 847 897 C920 888 1010 860 1040 830 L1037 771 L1044 690 Z" fill="url(#side)" />
      <path d="M516 675 C514 650 526 625 564 604 C605 582 690 559 780 559 C860 559 955 575 989 604 C1020 628 1042 650 1044 693 C1010 735 900 773 775 773 C660 773 545 745 516 686 Z" fill="#ffa000" stroke="none" />
      <g clipPath="url(#filClip)" stroke="none">
        <path d="M518 672 C560 735 660 752 775 752 C885 755 1000 725 1042 676" fill="none" stroke="url(#fil)" strokeWidth="15" filter="url(#soft)" />
      </g>
      <path d="M1044 693 C1010 735 900 773 775 773 C660 773 545 745 516 686" fill="none" />
      <ellipse cx="779" cy="647" rx="230" ry="87" fill="#ffa000" />
      <ellipse cx="821" cy="606" rx="16.3" ry="6.5" fill="url(#hole)" />
      <ellipse cx="660.6" cy="654.6" rx="16.3" ry="6.5" fill="url(#hole)" />
      <ellipse cx="854" cy="682" rx="16.3" ry="6.5" fill="url(#hole)" />
      {/* left rib */}
      <path d="M510 752 L430 830 L505.7 807 Z" fill="#f09000" />
      <path d="M512 697 C498 712 488 722 483.4 728.6 L381 827 C378 832 381 836 390 836.5 C405 838 420 834 430 830 L510 752 Z" fill="url(#ribL)" />
      {/* front ribs */}
      <path d="M724.5 857 L650.8 931.4 L725.4 907 Z" fill="#f09000" />
      <path d="M771.3 860.7 L831.6 938.6 L771.3 910.7 Z" fill="#b86e00" />
      <path d="M724.5 857 C740 855 760 856 771.3 860.7 L771.3 910.7 C760 906 740 905 725.4 907 Z" fill="url(#col)" />
      <path d="M749 807 L755.7 807 L771.3 860.7 C760 856 740 855 724.5 857 Z" fill="url(#wedge)" />
      <path d="M749 807 C740 805 725 805 711 818 L599.5 931 C597 936 605 938.6 621.8 938.6 C632 938 642 935 650.8 931.4 L724.5 857 Z" fill="url(#ribF)" />
      <path d="M755.7 807 C768 806 782 810 796 828.6 L880.7 937 C884 944 878 948 862.9 948 C850 948 840 943 831.6 938.6 L771.3 860.7 Z" fill="url(#ribG)" />
      {/* right rib */}
      <path d="M1036.8 773 L1100 855 L1040 830 Z" fill="#b86e00" />
      <path d="M1044 716 L1101.8 793 L1150.9 855 C1153 860 1150 866 1142 866 C1135 866.5 1115 862 1100 855 L1036.8 773 C1037 750 1040 730 1044 716 Z" fill="url(#ribR)" />
    </g>
    {/* WCS axis stub */}
    <text x="111" y="1175" textAnchor="middle" fontSize="11" fill="#3a55f0" fontFamily="Liberation Sans, sans-serif">Z</text>
    <polygon points="111,1180 116,1199 106,1199" fill="#0336c4" />
    <rect x="108.5" y="1197" width="5" height="18" fill="#0336c4" />
  </svg>
)

const sideIcons = ['bracket', 'bracket', 'extrude', 'wrench', 'sketchWrench', 'circle', 'axisEye', 'blend', 'rect', 'mirrorSm']
const sideGaps = [0, 7, 7, 7, 7, 7, 6, 6, 8, 7]

const SideBar = () => (
  <div className="w-[44px] shrink-0 border-l border-[#e6e6e6] pt-[11px] flex flex-col items-center">
    {sideIcons.map((k, i) => (
      <div key={i} style={{ marginTop: sideGaps[i] }}>
        <I k={k} size={33} />
      </div>
    ))}
    <div className="w-[36px] h-px bg-[#ddd] mt-[8px]" />
  </div>
)

type Row = { t: string; icon: string; off?: boolean; badge?: 'info' | 'warn'; bold?: boolean }

const rows: Row[] = [
  { t: '基准坐标系 (0)', icon: 'csys', off: true },
  { t: '圆锥 (1)', icon: 'cone' },
  { t: '边倒圆 (2)', icon: 'blendSm' },
  { t: '壳 (3)', icon: 'shell' },
  { t: '基准平面 (4)', icon: 'plane', off: true },
  { t: '草图 (5) "SKETCH_000"', icon: 'sketch', off: true },
  { t: '拉伸 (6)', icon: 'extrude', badge: 'info' },
  { t: '拉伸 (7)', icon: 'extrude', badge: 'warn' },
  { t: '拉伸 (8)', icon: 'extrude' },
  { t: '草图 (9) "SKETCH_002"', icon: 'sketch', off: true },
  { t: '基准平面 (10)', icon: 'plane', off: true },
  { t: '草图 (11) "SKETCH_003"', icon: 'sketch', off: true },
  { t: '拉伸 (12)', icon: 'extrude' },
  { t: '面倒圆 (13)', icon: 'faceBlend' },
  { t: '镜像特征 (14)', icon: 'mirrorSm' },
  { t: '镜像特征 (16)', icon: 'mirrorSm' },
  { t: '基准平面 (19)', icon: 'plane', off: true },
  { t: '镜像特征 (20)', icon: 'mirrorSm' },
  { t: '镜像特征 (22)', icon: 'mirrorSm' },
  { t: '镜像特征 (24)', icon: 'mirrorSm' },
  { t: '边倒圆 (27)', icon: 'blendSm' },
  { t: '拉伸 (28)', icon: 'extrude', bold: true },
]

const Check = ({ size = 16 }: { size?: number }) => (
  <svg width={size} height={size} viewBox="0 0 16 16" className="shrink-0">
    <path d="M2 8.5 L6 13.5 L14.5 2.5" fill="none" stroke="#23d944" strokeWidth="2" />
  </svg>
)

const Eye = ({ off, badge }: { off?: boolean; badge?: 'info' | 'warn' }) => (
  <svg width="16" height="16" viewBox="0 0 16 16" className="shrink-0">
    <path d="M1 8 C4 3.5 12 3.5 15 8 C12 12.5 4 12.5 1 8 Z" fill="#fff" stroke={off ? '#666' : '#444'} strokeWidth="0.9" />
    <circle cx="8" cy="8" r="3.6" fill={off ? '#aaa' : '#444'} />
    {off && <path d="M1 15 L14 1" stroke="#333" strokeWidth="0.9" />}
    {badge === 'info' && (
      <g>
        <circle cx="7" cy="5.5" r="5.2" fill="#1570b8" stroke="#0b3c66" strokeWidth="0.6" />
        <path d="M7 3 V8" stroke="#fff" strokeWidth="1.4" />
      </g>
    )}
    {badge === 'warn' && (
      <g>
        <polygon points="7,0.5 13,10.5 1,10.5" fill="#f6d23a" stroke="#8a6a10" strokeWidth="0.7" />
        <path d="M7 3.5 V7.5 M7 8.5 V9.6" stroke="#333" strokeWidth="1.1" />
      </g>
    )}
  </svg>
)

const Cells = ({ children, cur, best }: { children: ReactNode; cur?: ReactNode; best?: boolean }) => (
  <>
    <div className="w-[251px] flex items-stretch border-r border-[#ebebeb] shrink-0">{children}</div>
    <div className="w-[30px] flex items-center justify-center border-r border-[#ebebeb] shrink-0 pl-[2px]">{cur}</div>
    <div className="w-[30px] flex items-center justify-center border-r border-[#ebebeb] shrink-0 pr-[3px]">{best && <Check />}</div>
    <div className="flex-1" />
  </>
)

const tint = (i: number) => (i % 2 === 0 ? 'bg-white' : 'bg-[#f9f9f9]')

const Root = ({ i, line, expand, children }: { i: number; line?: 'top' | 'mid' | 'end'; expand?: string; children: ReactNode }) => (
  <div className={`h-[24px] border-b border-[#e9e9e9] flex ${tint(i)}`}>
    <Cells best={i === 3}>
      <div className="w-[3px] shrink-0" />
      <div className="w-[18px] shrink-0 relative flex items-center justify-center">
        <div className={`absolute left-[8px] border-l border-dotted border-[#777] ${line === 'top' ? 'top-[12px] bottom-0' : line === 'end' ? 'top-0 bottom-[12px]' : 'top-0 bottom-0'}`} />
        <div className="absolute left-[8px] right-0 top-[11px] border-t border-dotted border-[#777]" />
        {expand && (
          <div className="relative w-[11px] h-[11px] bg-white border border-[#d0d0d0] text-[#222] flex items-center justify-center text-[12px] leading-none">
            {expand}
          </div>
        )}
      </div>
      <div className="flex items-center gap-[1px] text-[15px] whitespace-nowrap text-[#222]">{children}</div>
    </Cells>
  </div>
)

const Nav = () => {
  const filler = Array.from({ length: 14 })
  return (
    <div className="w-[372px] shrink-0 h-full border-l-2 border-[#b8b8b8] bg-white pl-[7px] pr-[6px] flex flex-col overflow-hidden">
      <div className="h-[31px] flex items-center pl-[5px] text-[15px] text-[#222]">
        <div className="w-[14px] h-[13px] border border-[#222] mr-[11px]" />
        部件导航器
      </div>
      <div className="flex-1 border border-[#d2d2d2] pr-[1px] overflow-hidden">
        <div className="h-[25px] bg-[#f0f0f0] border-b-2 border-[#dcdcdc] flex text-[15px] text-[#222]">
          <div className="w-[251px] shrink-0 border-r border-[#d8d8d8] pl-[7px] flex items-center">
            名称
            <svg width="12" height="7" viewBox="0 0 12 7" className="ml-[18px]">
              <polygon points="6,0 12,7 0,7" fill="#111" />
            </svg>
          </div>
          <div className="w-[30px] shrink-0 border-r border-[#d8d8d8] pl-[6px] flex items-center">当.</div>
          <div className="w-[30px] shrink-0 border-r border-[#d8d8d8] pl-[6px] flex items-center">最.</div>
          <div className="flex-1 pl-[6px] flex items-center">附注</div>
        </div>
        <Root i={0} line="top">
          <span className="w-[19px] flex justify-center -ml-[3px] mr-[1px]"><I k="clock" size={16} /></span>
          历史记录建模模式
        </Root>
        <Root i={1} line="mid" expand="+">
          <span className="w-[19px] flex justify-center -ml-[3px] mr-[1px]"><I k="view" size={16} /></span>
          模型视图
        </Root>
        <Root i={2} line="mid" expand="+">
          <span className="w-[16px] flex justify-center -ml-[1px]"><Check size={15} /></span>
          <I k="cam" size={15} />
          <span className="ml-[3px]">摄像机</span>
        </Root>
        <Root i={3} line="end" expand="−">
          <span className="w-[16px] flex justify-center -ml-[1px]">
            <span className="w-[14px] h-[14px] rounded-full border border-[#2c8a2c] bg-[radial-gradient(circle_at_35%_30%,#d8ffd0,#35d535_60%,#1f9a1f)]" />
          </span>
          <I k="hist" size={15} />
          <span className="ml-[3px]">模型历史记录</span>
        </Root>
        {rows.map((r, idx) => {
          const i = idx + 4
          const last = idx === rows.length - 1
          return (
            <div key={r.t} className={`h-[24px] border-b border-[#e9e9e9] flex ${tint(i)}`}>
              <Cells best cur={last ? <TreeBadge /> : undefined}>
                <div className="w-[28px] shrink-0" />
                <div className="w-[10px] shrink-0 flex flex-col">
                  <div className="h-[12px] border-l border-b border-dotted border-[#777]" />
                  {!last && <div className="flex-1 border-l border-dotted border-[#777]" />}
                </div>
                <div className={`flex items-center text-[15px] whitespace-nowrap ${r.off ? 'text-[#a9a9a9]' : 'text-[#222]'} ${r.bold ? 'font-bold' : ''}`}>
                  <Eye off={r.off} badge={r.badge} />
                  <span className="ml-[1px] mr-[3px] flex">
                    <I k={r.icon} size={17} />
                  </span>
                  {r.t}
                </div>
              </Cells>
            </div>
          )
        })}
        {filler.map((_, n) => (
          <div key={n} className={`h-[24px] border-b border-[#e9e9e9] flex ${tint(n + 26)}`}>
            <Cells>
              <span />
            </Cells>
          </div>
        ))}
      </div>
    </div>
  )
}

const TreeBadge = () => (
  <svg width="10" height="14" viewBox="0 0 10 14">
    <rect x="1" y="1" width="5" height="3" fill="#fff" stroke="#333" strokeWidth="0.8" />
    <rect x="4" y="6" width="5" height="3" fill={OR} />
    <rect x="1" y="10" width="5" height="3" fill="#fff" stroke="#333" strokeWidth="0.8" />
    <path d="M2 4 V10" stroke="#333" strokeWidth="0.8" />
  </svg>
)

const Strip = () => (
  <div className="flex-1 h-full bg-[#dadada] flex flex-col items-start">
    <div className="w-full h-[33px] flex justify-center items-center pl-[2px]">
      <Settings size={16} strokeWidth={1.4} className="text-[#333]" />
    </div>
    <div className="h-[49px] flex items-end pb-[4px] pl-[5px]"><I k="sideBox" size={24} /></div>
    <div className="w-[30px] h-[45px] bg-white border border-l-0 border-[#c4c4c4] flex items-center pl-[2px]"><I k="bracket" size={25} /></div>
    <div className="h-[42px] flex items-center pl-[2px]"><I k="partSpec" size={26} /></div>
    <div className="h-[60px] flex items-center pl-[2px] pt-[8px]"><I k="globe" size={25} /></div>
    <div className="h-[46px] flex items-center pl-[2px] pt-[4px]"><I k="clock" size={25} /></div>
    <div className="h-[46px] flex items-center pl-[2px]"><I k="tools" size={25} /></div>
  </div>
)

export default function App() {
  return (
    <div className="w-[1825px] h-[1215px] overflow-hidden relative flex flex-col bg-gradient-to-r from-[#00618a] to-[#0475a2] font-['Noto_Sans','Noto_Sans_CJK_SC',sans-serif]">
      <TitleBar />
      <MenuBar />
      <div className="flex-1 min-h-0 ml-[4px] mr-[2px] flex flex-col bg-white">
        <Ribbon />
        <Toolbar />
        <div className="flex-1 min-h-0 flex">
          <div className="w-[1369px] shrink-0 flex flex-col">
            <div className="h-[29px] shrink-0 border-b-2 border-[#00618a] flex items-stretch text-[15px]">
              <div className="w-[108px] flex items-center text-[#222] pl-[6px] gap-[3px]">
                <svg width="17" height="17" viewBox="0 0 17 17" fill="none" stroke="#555" strokeWidth="1">
                  <path d="M3 3 L8 1 L14 3 V14 L8 16 L3 14 Z M8 1 V16" />
                  <circle cx="9" cy="9" r="3" />
                </svg>
                发现中心
              </div>
              <div className="w-[120px] bg-[#00618a] text-white flex items-center pl-[5px]">
                <svg width="19" height="16" viewBox="0 0 32 32">{Icons.part}</svg>
                <span className="ml-[2px] w-[63px] whitespace-nowrap">后盖.prt</span>
                <svg width="11" height="12" viewBox="0 0 11 12" fill="none" stroke="#fff" strokeWidth="1.2">
                  <path d="M1 1 H7 V11 H1 Z M7 3 H10 V8 H7" />
                </svg>
                <X size={12} strokeWidth={3} className="ml-[4px]" />
              </div>
            </div>
            <Model />
          </div>
          <SideBar />
          <Nav />
          <Strip />
        </div>
      </div>
      <div className="absolute right-0 bottom-[3px] text-[#555] whitespace-nowrap leading-none font-['Liberation_Mono','Noto_Sans_CJK_SC',monospace] text-[13.6px]">
        UG<span className="text-[16px] font-light">爱好者论坛</span>@xiang6
      </div>
    </div>
  )
}
